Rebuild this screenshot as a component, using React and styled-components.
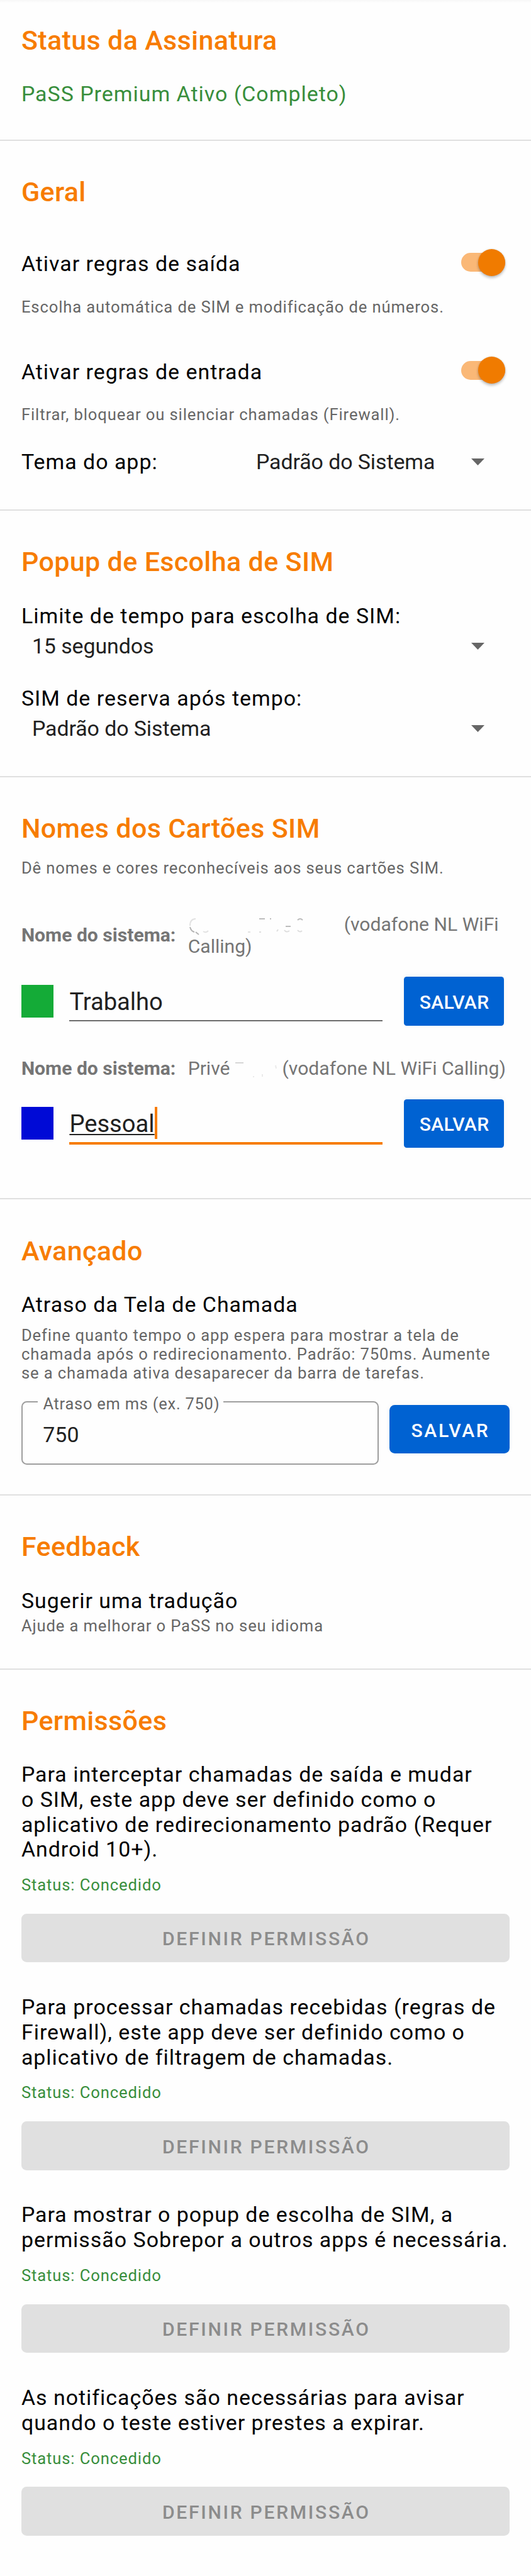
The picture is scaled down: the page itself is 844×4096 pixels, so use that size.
import { useState } from 'react';
import styled, { createGlobalStyle, css } from 'styled-components';

const GlobalStyle = createGlobalStyle`
  * {
    box-sizing: border-box;
  }
  body {
    margin: 0;
    background-color: #fefefe;
    font-family: Roboto, sans-serif;
    font-kerning: normal;
    -webkit-font-smoothing: antialiased;
  }
`;

// Styled Components
const PageWrapper = styled.div`
  display: flex;
  flex-direction: column;
  width: 844px;
  height: 4096px;
  overflow: hidden;
  background: linear-gradient(#f7f7f7, #fefefe 5px);
`;

const Section = styled.section`
  display: flex;
  flex-direction: column;
  padding: ${({ $first }) => ($first ? '39.8px' : '57.2px')} 33.9px ${({ $bottom }) => $bottom}px;
  border-bottom: ${({ $last }) => ($last ? 'none' : '2px solid #e0e0e0')};
`;

const Title = styled.h2`
  margin: 0 0 1px;
  font-size: 43px;
  font-weight: 500;
  line-height: 49px;
  letter-spacing: 0.0085em;
  color: #f77c00;
`;

const bodyText = css`
  margin: 0;
  font-size: 33.9px;
  line-height: 39.8px;
  font-weight: 400;
`;

const Label = styled.p`
  ${bodyText}
  margin-top: ${({ $top = 0 }) => $top}px;
  margin-bottom: -0.6px;
  padding-top: 0.6px;
  letter-spacing: 0.0297em;
  color: #000;
  white-space: pre-line;
`;

const PlanStatus = styled(Label)`
  color: #388e3c;
`;

const Caption = styled.p`
  margin: ${({ $top = 0 }) => $top}px 0 0;
  font-size: 25.6px;
  line-height: 30.2px;
  letter-spacing: 0.0345em;
  color: ${({ $granted }) => ($granted ? '#388e3c' : '#666')};
  white-space: pre-line;
`;

const SwitchRow = styled.div`
  display: flex;
  align-items: center;
  justify-content: space-between;
  height: 60px;
  margin-top: ${({ $top }) => $top}px;
`;

const SwitchTrack = styled.button`
  display: flex;
  align-items: center;
  justify-content: ${({ $on }) => ($on ? 'flex-end' : 'flex-start')};
  width: 69.4px;
  height: 30px;
  margin: 0 7.6px 4.6px 0;
  padding: 0;
  border: none;
  border-radius: 15px;
  background: ${({ $on }) => ($on ? '#fab877' : '#b9b9b9')};
`;

const SwitchThumb = styled.span`
  flex: none;
  width: 43px;
  height: 43px;
  border-radius: 50%;
  background-color: ${({ $on }) => ($on ? '#f07b00' : '#fff')};
  box-shadow: 0 3px 4px rgba(0, 0, 0, 0.24), 0 0 3px rgba(0, 0, 0, 0.12);
`;

const InlineField = styled.div`
  display: grid;
  grid-template-columns: 356px 1fr;
  align-items: center;
  margin-top: 39.9px;
`;

const Spinner = styled.div`
  ${bodyText}
  display: flex;
  align-items: center;
  justify-content: space-between;
  margin-top: ${({ $top = 0 }) => $top}px;
  margin-bottom: -0.6px;
  padding: 0.6px 40.5px 0 17px;
  letter-spacing: -0.002em;
  color: #212121;

  svg {
    display: block;
    margin-bottom: 1px;
  }
`;

const SystemName = styled.div`
  display: flex;
  align-items: center;
  margin-top: ${({ $top }) => $top}px;
  font-size: 30.1px;
  line-height: 35.6px;
  color: #757575;
`;

const SystemLabel = styled.span`
  flex: none;
  width: 264.8px;
  font-weight: 700;
`;

const Erased = styled.svg`
  display: inline-block;
  width: ${({ $width }) => $width}px;
  height: 30px;
  vertical-align: -7px;
`;

const SimRow = styled.div`
  display: flex;
  align-items: center;
  height: 77.2px;
  margin-top: 30.6px;
`;

const ColorSwatch = styled.div`
  width: 51.5px;
  height: 51.5px;
  margin-right: 25px;
  background-color: ${({ $color }) => $color};
`;

const NameInput = styled.div`
  display: flex;
  align-items: center;
  align-self: flex-start;
  width: 497.4px;
  height: ${({ $focused }) => ($focused ? '72.4px' : '70.4px')};
  margin-right: 33.8px;
  padding-top: 11px;
  border-bottom: ${({ $focused }) => ($focused ? '4px solid #f77c00' : '2px solid #6b6b6b')};
  font-size: 38.15px;
  line-height: 44px;
  color: #212121;
`;

const Composing = styled.span`
  text-decoration: underline;
  text-decoration-thickness: 2px;
  text-decoration-skip-ink: none;
  text-underline-offset: 3px;
`;

const Caret = styled.span`
  width: 4px;
  height: 51.5px;
  margin-top: -4px;
  background-color: #f77c00;
`;

const SaveButton = styled.button`
  width: ${({ $wide }) => ($wide ? '191.1px' : '159.9px')};
  height: 77.2px;
  margin-top: ${({ $wide }) => ($wide ? '6px' : '0')};
  padding: ${({ $wide }) => ($wide ? '2.5px 0 0 2.7px' : '2.5px 0 0 1px')};
  border: none;
  border-radius: ${({ $wide }) => ($wide ? '8.5px' : '4.5px')};
  background-color: #0062d2;
  color: #fff;
  font-family: inherit;
  font-size: 30.1px;
  font-weight: 500;
  letter-spacing: ${({ $wide }) => ($wide ? '0.0893em' : '0.01em')};
  box-shadow: 0 -2px 10px rgba(0, 0, 0, 0.035);
`;

const DelayRow = styled.div`
  display: flex;
  align-items: flex-start;
  justify-content: space-between;
  margin-top: 29.6px;
`;

const OutlinedField = styled.div`
  position: relative;
  width: 567.9px;
  height: 100.7px;
  padding: 32px 0 0 32.4px;
  border: 2px solid #9e9e9e;
  border-radius: 8.5px;
  font-size: 33.9px;
  line-height: 40px;
  color: #212121;
`;

const FloatingLabel = styled.span`
  position: absolute;
  top: -13px;
  left: 24px;
  width: 295px;
  padding-left: 8.5px;
  background-color: #fefefe;
  font-size: 25.4px;
  line-height: 30px;
  letter-spacing: 0.031em;
  color: #666;
  white-space: nowrap;
`;

const PermissionItem = styled.div`
  display: flex;
  flex-direction: column;
  margin-top: ${({ $top }) => $top}px;
`;

const PermissionButton = styled.button`
  height: 77.2px;
  margin-top: 30.7px;
  padding: 2.5px 0 0 2.7px;
  border: none;
  border-radius: 8.5px;
  background-color: #e0e0e0;
  color: #8c8c8c;
  font-family: inherit;
  font-size: 30.1px;
  font-weight: 500;
  letter-spacing: 0.0893em;
`;

const permissions = [
  'Para interceptar chamadas de saída e mudar\no SIM, este app deve ser definido como o\naplicativo de redirecionamento padrão (Requer\nAndroid 10+).',
  'Para processar chamadas recebidas (regras de\nFirewall), este app deve ser definido como o\naplicativo de filtragem de chamadas.',
  'Para mostrar o popup de escolha de SIM, a\npermissão Sobrepor a outros apps é necessária.',
  'As notificações são necessárias para avisar\nquando o teste estiver prestes a expirar.',
];

const Arrow = () => (
  <svg width="21" height="11" viewBox="0 0 21 11">
    <path d="M0 0h21L10.5 11z" fill="#666" />
  </svg>
);

const Switch = ({ on, onToggle }) => (
  <SwitchTrack type="button" $on={on} onClick={onToggle}>
    <SwitchThumb $on={on} />
  </SwitchTrack>
);

// Component Logic
const App = () => {
  const [outgoing, setOutgoing] = useState(true);
  const [incoming, setIncoming] = useState(true);

  return (
    <PageWrapper>
      <GlobalStyle />
      <Section $first $bottom={52.5}>
        <Title>Status da Assinatura</Title>
        <PlanStatus $top={40.1}>PaSS Premium Ativo (Completo)</PlanStatus>
      </Section>

      <Section $bottom={55.9}>
        <Title>Geral</Title>
        <SwitchRow $top={58.2}>
          <Label>Ativar regras de saída</Label>
          <Switch on={outgoing} onToggle={() => setOutgoing(!outgoing)} />
        </SwitchRow>
        <Caption $top={23.2}>Escolha automática de SIM e modificação de números.</Caption>
        <SwitchRow $top={57.9}>
          <Label>Ativar regras de entrada</Label>
          <Switch on={incoming} onToggle={() => setIncoming(!incoming)} />
        </SwitchRow>
        <Caption $top={23.1}>Filtrar, bloquear ou silenciar chamadas (Firewall).</Caption>
        <InlineField>
          <Label>Tema do app:</Label>
          <Spinner>
            Padrão do Sistema
            <Arrow />
          </Spinner>
        </InlineField>
      </Section>

      <Section $bottom={55.6}>
        <Title>Popup de Escolha de SIM</Title>
        <Label $top={40}>Limite de tempo para escolha de SIM:</Label>
        <Spinner $top={8.6}>
          15 segundos
          <Arrow />
        </Spinner>
        <Label $top={43.2}>SIM de reserva após tempo:</Label>
        <Spinner $top={8.4}>
          Padrão do Sistema
          <Arrow />
        </Spinner>
      </Section>

      <Section $bottom={80.7}>
        <Title>Nomes dos Cartões SIM</Title>
        <Caption $top={22.1}>Dê nomes e cores reconhecíveis aos seus cartões SIM.</Caption>
        <SystemName $top={56.3}>
          <SystemLabel>Nome do sistema:</SystemLabel>
          <span>
            {/* wiped-out part of the SIM name */}
            <Erased $width={248} viewBox="0 0 248 30" fill="none" stroke="#cfcfcf" strokeWidth="2">
              <path d="M3 17c1 4 3 7 7 8M12 25l5 4" stroke="#b5b5b5" />
              <path d="M3 15c0-7 3-11 9-11M24 24c3 2 6 1 8-1M95 25h4" stroke="#e2e2e2" />
              <path d="M113 4h9M130 4h2M155 16h8M174 6c3-3 6-2 8 0" stroke="#bdbdbd" />
              <path d="M113 25h3M141 24l2-3M153 22c2 3 5 3 8 1M174 22c2 3 5 3 7 1" stroke="#dedede" />
            </Erased>
            (vodafone NL WiFi
            <br />
            Calling)
          </span>
        </SystemName>
        <SimRow>
          <ColorSwatch $color="#14ab37" />
          <NameInput>Trabalho</NameInput>
          <SaveButton>SALVAR</SaveButton>
        </SimRow>
        <SystemName $top={50.8}>
          <SystemLabel>Nome do sistema:</SystemLabel>
          <span>
            Privé
            <Erased $width={83} viewBox="0 0 83 30" fill="none" stroke="#d6d6d6" strokeWidth="2">
              <path d="M8 4h13" />
              <path d="M37 25v2M51 22v4M72 8l1 5" stroke="#eaeaea" />
            </Erased>
            (vodafone NL WiFi Calling)
          </span>
        </SystemName>
        <SimRow>
          <ColorSwatch $color="#000ad6" />
          <NameInput $focused>
            <Composing>Pessoal</Composing>
            <Caret />
          </NameInput>
          <SaveButton>SALVAR</SaveButton>
        </SimRow>
      </Section>

      <Section $bottom={46.7}>
        <Title>Avançado</Title>
        <Label $top={40}>Atraso da Tela de Chamada</Label>
        <Caption $top={13.6}>
          {'Define quanto tempo o app espera para mostrar a tela de\nchamada após o redirecionamento. Padrão: 750ms. Aumente\nse a chamada ativa desaparecer da barra de tarefas.'}
        </Caption>
        <DelayRow>
          <OutlinedField>
            <FloatingLabel>Atraso em ms (ex. 750)</FloatingLabel>
            750
          </OutlinedField>
          <SaveButton $wide>SALVAR</SaveButton>
        </DelayRow>
      </Section>

      <Section $bottom={52.7}>
        <Title>Feedback</Title>
        <Label $top={40.3}>Sugerir uma tradução</Label>
        <Caption $top={4.9}>Ajude a melhorar o PaSS no seu idioma</Caption>
      </Section>

      <Section $last $bottom={64}>
        <Title>Permissões</Title>
        {permissions.map((text, index) => (
          <PermissionItem key={text} $top={index === 0 ? 39.5 : 51.4}>
            <Label>{text}</Label>
            <Caption $top={21.5} $granted>Status: Concedido</Caption>
            <PermissionButton disabled>DEFINIR PERMISSÃO</PermissionButton>
          </PermissionItem>
        ))}
      </Section>
    </PageWrapper>
  );
};

export default App;
